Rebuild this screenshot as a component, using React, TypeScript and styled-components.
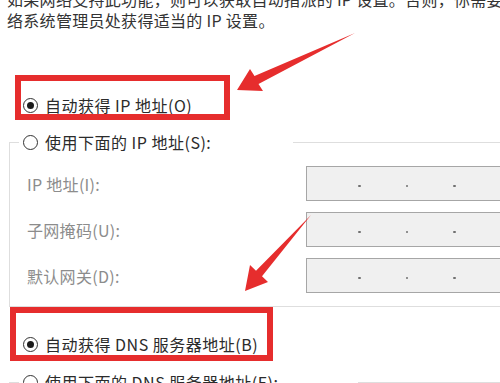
import React from 'react';
import styled, { createGlobalStyle } from 'styled-components';

const GlobalStyle = createGlobalStyle`
  html, body {
    margin: 0;
    padding: 0;
    background: #fff;
  }
  body {
    font-family: "Noto Sans CJK SC", "Noto Sans", sans-serif;
  }
`;

const Page = styled.div`
  position: relative;
  width: 500px;
  height: 383px;
  overflow: hidden;
  background: #fff;
  font-size: 16px;
  color: #333;
`;

const Intro = styled.p`
  margin: -11px 0 0 7px;
  line-height: 21px;
  letter-spacing: 0.3px;
  white-space: nowrap;
  color: #333;
`;

const OptionRow = styled.div<{ $top?: number; $inset?: number }>`
  display: flex;
  align-items: center;
  gap: 7px;
  height: 20px;
  margin-top: ${(p) => p.$top ?? 0}px;
  padding-left: ${(p) => p.$inset ?? 23}px;
  letter-spacing: 0.5px;
  white-space: nowrap;
  color: #2b2b2b;
`;

const Radio = styled.span<{ $checked?: boolean }>`
  box-sizing: border-box;
  flex: none;
  display: flex;
  align-items: center;
  justify-content: center;
  width: 15px;
  height: 15px;
  border: 1.5px solid #333;
  border-radius: 50%;
  background: #fff;

  &::after {
    content: '';
    width: 7px;
    height: 7px;
    border-radius: 50%;
    background: ${(p) => (p.$checked ? '#1c1c1c' : 'transparent')};
  }
`;

const GroupBox = styled.fieldset<{ $top: number }>`
  box-sizing: border-box;
  width: 620px;
  min-width: 0;
  margin: ${(p) => p.$top}px 0 0 9px;
  padding: 0 0 13px 9px;
  border: 1px solid #dedede;
`;

const Legend = styled.legend<{ $width: number }>`
  box-sizing: border-box;
  width: ${(p) => p.$width}px;
  margin: 0;
  padding: 0 0 0 4px;
`;

const Fields = styled.div`
  display: flex;
  flex-direction: column;
  gap: 11px;
  margin-top: 14px;
`;

const FieldRow = styled.div`
  display: flex;
  align-items: center;
  height: 35px;
`;

const FieldLabel = styled.span`
  box-sizing: border-box;
  width: 287px;
  padding-left: 8px;
  letter-spacing: 0.3px;
  color: #8c8c8c;
  white-space: nowrap;
`;

const IpBox = styled.div`
  box-sizing: border-box;
  display: flex;
  align-items: center;
  gap: 45px;
  width: 240px;
  height: 35px;
  padding-left: 51px;
  border: 1px solid #a6a6a6;
  background: #f0f0f0;
`;

const Dot = styled.span`
  width: 2.5px;
  height: 2.5px;
  margin-top: 5px;
  border-radius: 50%;
  background: #707070;
`;

const Annotations = styled.svg`
  position: absolute;
  left: 0;
  top: 0;
  width: 500px;
  height: 383px;
  pointer-events: none;
`;

const RED = '#e62d2d';

const Option: React.FC<{ label: string; checked?: boolean; top?: number; inset?: number }> = ({
  label,
  checked,
  top,
  inset,
}) => (
  <OptionRow $top={top} $inset={inset}>
    <Radio $checked={checked} />
    <span>{label}</span>
  </OptionRow>
);

const IpField: React.FC<{ label: string }> = ({ label }) => (
  <FieldRow>
    <FieldLabel>{label}</FieldLabel>
    <IpBox>
      <Dot />
      <Dot />
      <Dot />
    </IpBox>
  </FieldRow>
);

const App: React.FC = () => (
  <Page>
    <GlobalStyle />
    <Intro>
      如果网络支持此功能，则可以获取自动指派的 IP 设置。否则，你需要从网
      <br />
      络系统管理员处获得适当的 IP 设置。
    </Intro>

    <Option label="自动获得 IP 地址(O)" checked top={64} />

    <GroupBox $top={17}>
      <Legend $width={274}>
        <Option label="使用下面的 IP 地址(S):" inset={0} />
      </Legend>
      <Fields>
        <IpField label="IP 地址(I):" />
        <IpField label="子网掩码(U):" />
        <IpField label="默认网关(D):" />
      </Fields>
    </GroupBox>

    <Option label="自动获得 DNS 服务器地址(B)" checked top={27} />

    <GroupBox $top={18}>
      <Legend $width={339}>
        <Option label="使用下面的 DNS 服务器地址(E):" inset={0} />
      </Legend>
      <Fields>
        <IpField label="首选 DNS 服务器(P):" />
      </Fields>
    </GroupBox>

    <Annotations viewBox="0 0 500 383">
      <rect x={18} y={78} width={209} height={39} fill="none" stroke={RED} strokeWidth={6} />
      <rect x={13} y={310} width={257} height={48} fill="none" stroke={RED} strokeWidth={6} />
      <polygon points="237,90 250,69 254.5,76 355,33 258.5,84 263,91" fill={RED} />
      <polygon points="245,291 250,265 256,270.8 311,215 262,276.2 268,282" fill={RED} />
    </Annotations>
  </Page>
);

export default App;
